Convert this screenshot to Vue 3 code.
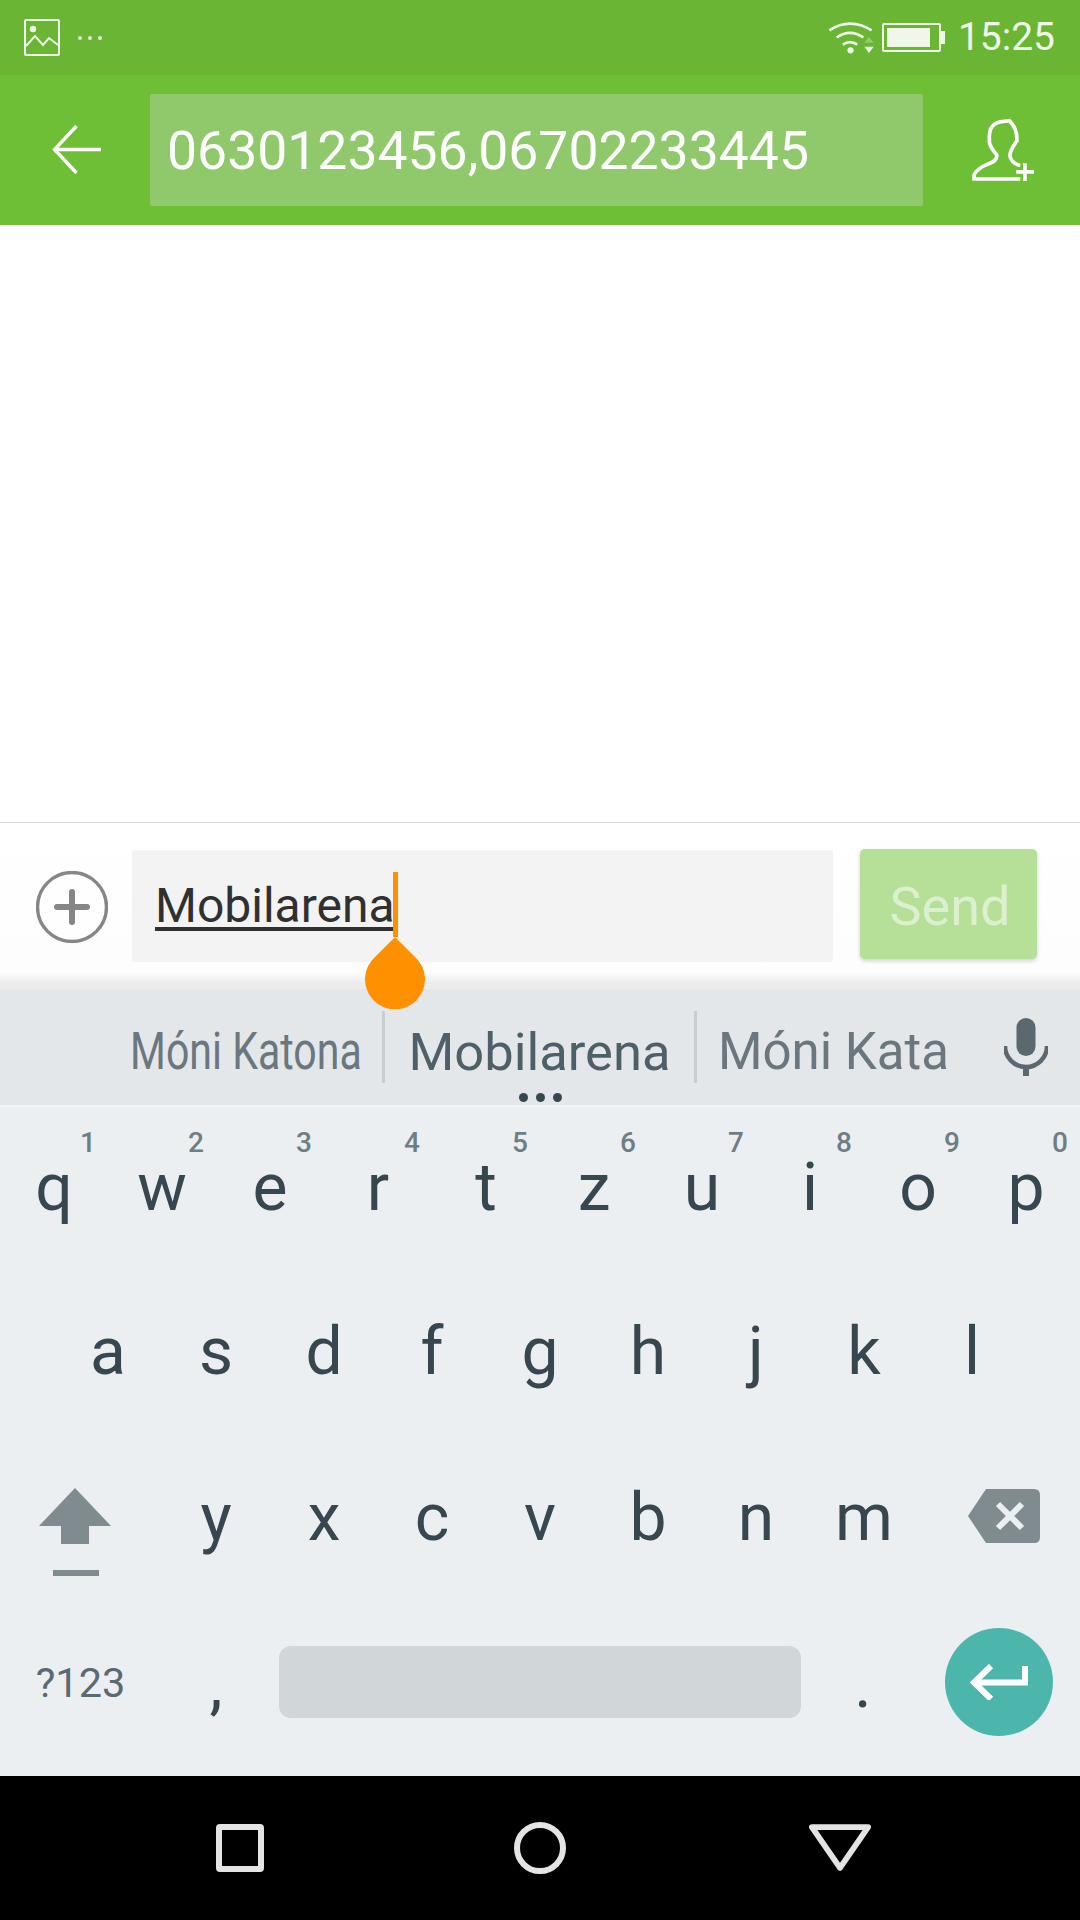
<template>
  <div class="screen">
    <header class="status-bar">
      <div class="status-left">
        <svg class="pic-icon" viewBox="0 0 36 37" fill="none" stroke="#f0f6e8">
          <rect x="1" y="1" width="34" height="35" rx="1" stroke-width="2" />
          <circle cx="9" cy="10" r="3.2" fill="#f0f6e8" stroke="none" />
          <path d="M2 27 L11 17 L19 26 L25 19 L34 26" stroke-width="2" />
        </svg>
        <div class="status-dots"><i></i><i></i><i></i></div>
      </div>
      <div class="status-right">
        <svg class="wifi-icon" viewBox="0 0 44 33" fill="none" stroke="#f0f6e8" stroke-width="2.6">
          <path d="M1 9 Q21 -4 42 9" />
          <path d="M8 16 Q21 7 34 16" />
          <path d="M14 23 Q21 18 28 23" />
          <circle cx="21.5" cy="28.5" r="3" fill="#f0f6e8" stroke="none" />
          <path d="M35 21 L39.500 15.500 L44 21 Z" fill="#93cb70" stroke="none" />
          <path d="M35 25 L44 25 L39.500 31 Z" fill="#f0f6e8" stroke="none" />
        </svg>
        <div class="battery">
          <div class="battery-body"><div class="battery-fill"></div></div>
          <div class="battery-tip"></div>
        </div>
        <span class="clock">15:25</span>
      </div>
    </header>

    <div class="app-bar">
      <svg class="back-icon" viewBox="0 0 50 50" fill="none" stroke="#fff" stroke-width="3.4">
        <path d="M24.500 1 L2.500 24.500 L24.500 48" />
        <path d="M3 24.500 H49" />
      </svg>
      <div class="recipients">0630123456,06702233445</div>
      <svg class="contact-icon" viewBox="690 350 200 195" fill="none" stroke="#fff" stroke-width="11">
        <path d="M840 534 H702 V522 Q712 502 745 489 Q772 480 770 462 Q744 432 748 416 Q744 365 790 362 L808 360 Q832 385 830 420 Q805 455 810 468 Q815 488 840 494" />
        <path d="M828 513 H881 M854 487 V540" />
      </svg>
    </div>

    <main class="thread"></main>

    <div class="composer">
      <svg class="attach-icon" viewBox="0 0 72 72" fill="none" stroke="#868686">
        <circle cx="36" cy="36" r="34.500" stroke-width="3.400" />
        <path d="M21 36 H51 M36 21 V51" stroke-width="6" stroke-linecap="round" />
      </svg>
      <div class="message-field">
        <span class="message-text">Mobilarena</span>
        <span class="caret"></span>
        <svg class="caret-handle" viewBox="0 0 60 72">
          <path d="M30 0 L50 20 A30 30 0 1 1 10 20 Z" fill="#ff9100" />
        </svg>
      </div>
      <button class="send-btn" type="button">Send</button>
    </div>

    <section class="keyboard">
      <div class="suggestions">
        <div class="sugg sugg-left"><span class="squeezed">Móni Katona</span></div>
        <div class="sugg sugg-main">Mobilarena</div>
        <div class="sugg sugg-right">Móni Kata</div>
        <svg class="mic-icon" viewBox="0 0 44 58" fill="#5b6870">
          <rect x="12.500" y="0" width="19" height="38" rx="9.500" />
          <path d="M1 28 A21 21 0 0 0 43 28" fill="none" stroke="#5b6870" stroke-width="4.500" />
          <rect x="19" y="48" width="6" height="10" />
        </svg>
        <div class="more-dots"><i></i><i></i><i></i></div>
      </div>

      <div class="key-row top-row">
        <div v-for="(k, i) in topRow" :key="k" class="key">
          <sup class="key-num">{{ (i + 1) % 10 }}</sup>{{ k }}
        </div>
      </div>
      <div class="key-row">
        <div v-for="k in midRow" :key="k" class="key">{{ k }}</div>
      </div>
      <div class="key-row">
        <div class="key key-side">
          <svg class="shift-icon" viewBox="0 0 72 88" fill="#7f8b8f">
            <path d="M36 0 L72 38 H50 V56 H22 V38 H0 Z" />
            <rect x="14" y="82" width="46" height="6" />
          </svg>
        </div>
        <div v-for="k in lowRow" :key="k" class="key">{{ k }}</div>
        <div class="key key-side">
          <svg class="back-key-icon" viewBox="0 0 72 54">
            <path d="M18 0 H66 Q72 0 72 6 V48 Q72 54 66 54 H18 L0 27 Z" fill="#7f8b8f" />
            <path d="M30 15 L54 39 M54 15 L30 39" stroke="#ebeff2" stroke-width="6" />
          </svg>
        </div>
      </div>
      <div class="key-row bottom-row">
        <div class="key key-sym">?123</div>
        <div class="key key-comma">,</div>
        <div class="spacebar"></div>
        <div class="key key-dot">.</div>
        <div class="key-enter">
          <div class="enter-circle">
            <svg class="enter-icon" viewBox="0 0 58 36" fill="none" stroke="#fff" stroke-width="6">
              <path d="M21 2 L4 18.500 L21 35" />
              <path d="M4 18.500 H55 V2" />
            </svg>
          </div>
        </div>
      </div>
    </section>

    <nav class="nav-bar">
      <div class="nav-item"><span class="nav-square"></span></div>
      <div class="nav-item"><span class="nav-circle"></span></div>
      <div class="nav-item">
        <svg class="nav-back" viewBox="0 0 64 48" fill="none" stroke="#e4e4e4" stroke-width="6" stroke-linejoin="round">
          <path d="M3 3 H61 L32 45 Z" />
        </svg>
      </div>
    </nav>
  </div>
</template>

<script setup>
const topRow = ["q", "w", "e", "r", "t", "z", "u", "i", "o", "p"];
const midRow = ["a", "s", "d", "f", "g", "h", "j", "k", "l"];
const lowRow = ["y", "x", "c", "v", "b", "n", "m"];
</script>

<style>
html,
body {
  margin: 0;
  background: #fff;
}
</style>

<style scoped>
.screen {
  width: 1080px;
  height: 1920px;
  display: flex;
  flex-direction: column;
  overflow: hidden;
  font-family: Roboto, "Liberation Sans", sans-serif;
}

/* status bar */
.status-bar {
  height: 75px;
  flex: none;
  background: #6ab534;
  display: flex;
  align-items: center;
  justify-content: space-between;
  padding: 0 25px 0 24px;
  box-sizing: border-box;
}

.status-left {
  display: flex;
  align-items: center;
  gap: 18px;
}

.pic-icon {
  width: 36px;
  height: 37px;
  display: block;
}

.status-dots {
  display: flex;
  gap: 6px;
}

.status-dots i {
  width: 4px;
  height: 4px;
  border-radius: 50%;
  background: #e6f1da;
}

.status-right {
  display: flex;
  align-items: center;
}

.wifi-icon {
  width: 46px;
  height: 34px;
  margin-right: 8px;
}

.battery {
  display: flex;
  align-items: center;
  margin-right: 13px;
}

.battery-body {
  width: 59px;
  height: 29px;
  border: 2px solid #f0f6e8;
  border-radius: 2px;
  box-sizing: border-box;
  padding: 3px;
}

.battery-fill {
  width: 43px;
  height: 100%;
  background: #f0f6e8;
}

.battery-tip {
  width: 4px;
  height: 13px;
  background: #f0f6e8;
}

.clock {
  font-size: 39px;
  color: #f0f6e8;
  line-height: 1;
}

/* app bar */
.app-bar {
  height: 150px;
  flex: none;
  background: #6ebf35;
  display: flex;
  align-items: center;
  box-sizing: border-box;
}

.back-icon {
  width: 50px;
  height: 50px;
  margin-left: 52px;
  margin-right: 48px;
  flex: none;
}

.recipients {
  width: 773px;
  height: 112px;
  flex: none;
  box-sizing: border-box;
  padding-left: 17px;
  background: #90c96c;
  border-radius: 2px;
  color: #fff;
  font-size: 53.500px;
  line-height: 114px;
  white-space: nowrap;
}

.contact-icon {
  width: 67px;
  height: 66px;
  margin-left: 47px;
  flex: none;
}

/* thread */
.thread {
  height: 598px;
  flex: none;
  background: #fff;
  border-bottom: 1px solid #d9d9d9;
  box-sizing: border-box;
}

/* composer */
.composer {
  height: 166px;
  flex: none;
  background: linear-gradient(#fff 0, #fdfdfd 150px, #ececec 160px, #ececec 166px);
  display: flex;
  align-items: flex-start;
  box-sizing: border-box;
  padding-top: 27px;
}

.attach-icon {
  width: 72px;
  height: 72px;
  margin: 21px 24px 0 36px;
  flex: none;
}

.message-field {
  width: 701px;
  height: 112px;
  flex: none;
  position: relative;
  box-sizing: border-box;
  padding-left: 23px;
  background: #f3f3f3;
  border-radius: 2px;
  color: #303030;
  font-size: 48px;
  line-height: 112px;
}

.message-text {
  display: inline-block;
  line-height: 42px;
  border-bottom: 4px solid #303030;
}

.caret {
  position: absolute;
  left: 261px;
  top: 22px;
  width: 5px;
  height: 65px;
  background: #ff9100;
}

.caret-handle {
  position: absolute;
  left: 233px;
  top: 87px;
  width: 60px;
  height: 72px;
  z-index: 2;
}

.send-btn {
  width: 177px;
  height: 110px;
  flex: none;
  margin: -1px 0 0 27px;
  padding: 4px 0 0 3px;
  border: none;
  border-radius: 5px;
  background: #b6df97;
  box-shadow: 0 2px 4px rgba(0, 0, 0, 0.18);
  color: #dbf0cc;
  font-family: inherit;
  font-size: 54px;
}

/* keyboard */
.keyboard {
  flex: 1;
  background: #ebeff2;
  display: flex;
  flex-direction: column;
}

.suggestions {
  height: 118px;
  flex: none;
  position: relative;
  background: #e3e7ea;
  border-bottom: 2px solid #f2f4f6;
  box-sizing: border-box;
  display: flex;
  align-items: center;
  font-size: 51px;
  color: #6a777e;
}

.sugg {
  height: 72px;
  line-height: 82px;
  white-space: nowrap;
  box-sizing: border-box;
}

.sugg-left {
  width: 385px;
  padding-right: 20px;
  text-align: right;
  border-right: 3px solid #c8cdd1;
}

.squeezed {
  display: inline-block;
  transform: scaleX(0.805);
  transform-origin: right center;
}

.sugg-main {
  width: 312px;
  text-align: center;
  font-size: 52.500px;
  color: #4e5f67;
  border-right: 3px solid #c8cdd1;
}

.sugg-right {
  width: 299px;
  padding-left: 21px;
}

.mic-icon {
  width: 44px;
  height: 58px;
  margin-left: 8px;
}

.more-dots {
  position: absolute;
  left: 519px;
  bottom: 3px;
  display: flex;
  gap: 8px;
}

.more-dots i {
  width: 9px;
  height: 9px;
  border-radius: 50%;
  background: #37474f;
}

.key-row {
  height: 166.500px;
  flex: none;
  display: flex;
  justify-content: center;
}

.key {
  width: 108px;
  flex: none;
  position: relative;
  text-align: center;
  font-size: 66px;
  line-height: 156px;
  color: #37474f;
}

.top-row .key {
  line-height: 161px;
}

.key-num {
  position: absolute;
  top: 20px;
  right: 12px;
  font-size: 28px;
  font-weight: 500;
  line-height: 32px;
  color: #6f7d85;
}

.key-side {
  width: 162px;
  display: flex;
  align-items: center;
  justify-content: center;
  padding-bottom: 10px;
  box-sizing: border-box;
}

.shift-icon {
  width: 72px;
  height: 88px;
  margin-right: 12px;
  margin-top: 28px;
}

.back-key-icon {
  width: 72px;
  height: 54px;
  margin-left: 10px;
  margin-top: -5px;
}

.bottom-row {
  justify-content: flex-start;
}

.key-sym {
  width: 161px;
  font-size: 41.500px;
  line-height: 151px;
  color: #5a6a72;
}

.key-comma {
  width: 110px;
}

.spacebar {
  width: 522px;
  height: 72px;
  flex: none;
  margin: 39px 0 0 8px;
  background: #d1d6d9;
  border-radius: 12px;
}

.key-dot {
  width: 124px;
}

.key-enter {
  flex: 1;
}

.enter-circle {
  width: 108px;
  height: 108px;
  margin: 21px 0 0 20px;
  border-radius: 50%;
  background: #4db6ac;
  display: flex;
  align-items: center;
  justify-content: center;
}

.enter-icon {
  width: 58px;
  height: 36px;
}

/* nav */
.nav-bar {
  height: 144px;
  flex: none;
  background: #000;
  display: flex;
  justify-content: center;
}

.nav-item {
  width: 300px;
  display: flex;
  align-items: center;
  justify-content: center;
}

.nav-square {
  width: 48px;
  height: 48px;
  box-sizing: border-box;
  border: 6px solid #e4e4e4;
  border-radius: 4px;
}

.nav-circle {
  width: 52px;
  height: 52px;
  box-sizing: border-box;
  border: 6px solid #e4e4e4;
  border-radius: 50%;
}

.nav-back {
  width: 62px;
  height: 47px;
  margin-top: -2px;
}
</style>
